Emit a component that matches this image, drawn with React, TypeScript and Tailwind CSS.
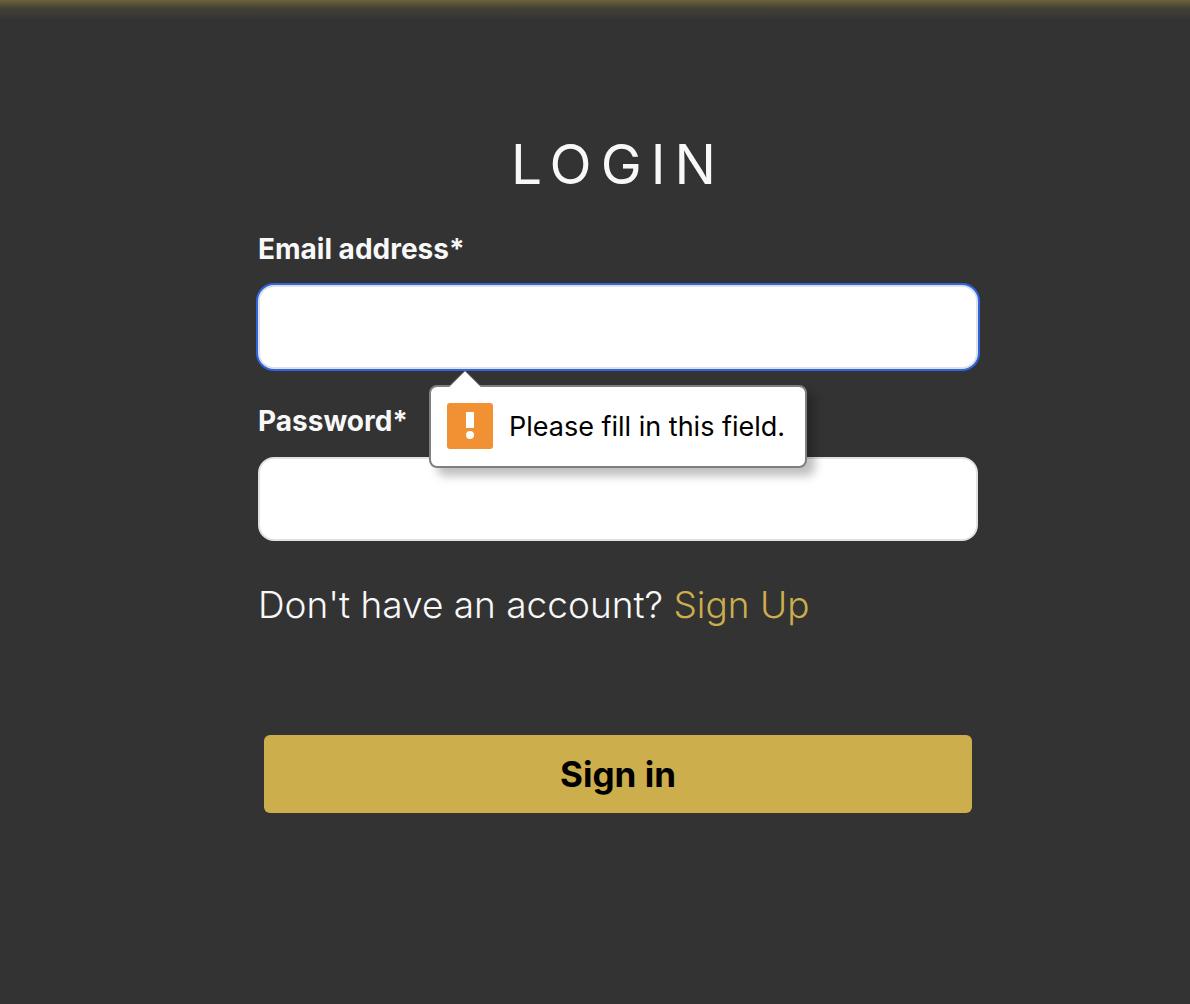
import { useState } from "react";

export default function App() {
  const [email, setEmail] = useState("");
  const [password, setPassword] = useState("");

  return (
    <div className="min-h-screen bg-[#333333] font-['Inter',sans-serif] text-[#f8f8f8]">
      <div className="h-5 bg-linear-to-b from-[#6e6139] via-[#413f34] via-45% to-[#333333]" />
      <main className="pt-[108px] pl-[46px]">
        <div className="mx-auto w-full max-w-[720px]">
          <h1 className="text-center text-[55px] leading-[72px] font-normal tracking-[9px]">LOGIN</h1>
          <form noValidate onSubmit={(e) => e.preventDefault()}>
            <label htmlFor="email" className="mt-7 block text-[28px] leading-[42px] font-bold">
              Email address*
            </label>
            <div className="relative mt-[15px]">
              <input
                id="email"
                type="email"
                value={email}
                onChange={(e) => setEmail(e.target.value)}
                className="block h-[84px] w-full rounded-2xl border-2 border-[#dee2e6] bg-white px-6 text-[28px] text-black ring-2 ring-[#2f65e3] outline-none"
              />
              <div
                role="alert"
                className="absolute top-[100px] left-[171px] z-10 flex h-[83px] w-[378px] items-start gap-4 rounded-lg border-2 border-[#7f7f7f] bg-white pt-4 pl-4 text-[27px] leading-[47px] text-black shadow-[8px_8px_10px_rgba(0,0,0,0.25)]"
              >
                <svg className="absolute -top-[17px] left-4 h-[19px] w-9" viewBox="0 0 36 19" aria-hidden="true">
                  <path d="M1 19 2 17 18 1 34 17 35 19Z" fill="white" />
                  <path d="M2 16.5 18 .8 34 16.5" fill="none" stroke="#7f7f7f" strokeWidth="1" />
                </svg>
                <svg className="size-[46px] shrink-0" viewBox="0 0 46 46" aria-hidden="true">
                  <rect width="46" height="46" rx="3" fill="#f19133" />
                  <rect x="19" y="9" width="8" height="16" fill="white" />
                  <circle cx="23" cy="32" r="4" fill="white" />
                </svg>
                <span className="whitespace-nowrap">Please fill in this field.</span>
              </div>
            </div>
            <label htmlFor="password" className="mt-[31px] block text-[28px] leading-[42px] font-bold">
              Password*
            </label>
            <input
              id="password"
              type="password"
              value={password}
              onChange={(e) => setPassword(e.target.value)}
              className="mt-[15px] block h-[84px] w-full rounded-2xl border-2 border-[#dee2e6] bg-white px-6 text-[28px] text-black outline-none"
            />
            <p className="mt-[34px] text-[37px] leading-[60px] font-light">
              Don't have an account?{" "}
              <a href="#signup" className="text-[#ccae4d]">Sign Up</a>
            </p>
            <div className="mt-[100px] px-1.5">
              <button type="submit" className="h-[78px] w-full rounded-md bg-[#ccae4d] text-[35px] font-bold text-black">
                Sign in
              </button>
            </div>
          </form>
        </div>
      </main>
    </div>
  );
}
